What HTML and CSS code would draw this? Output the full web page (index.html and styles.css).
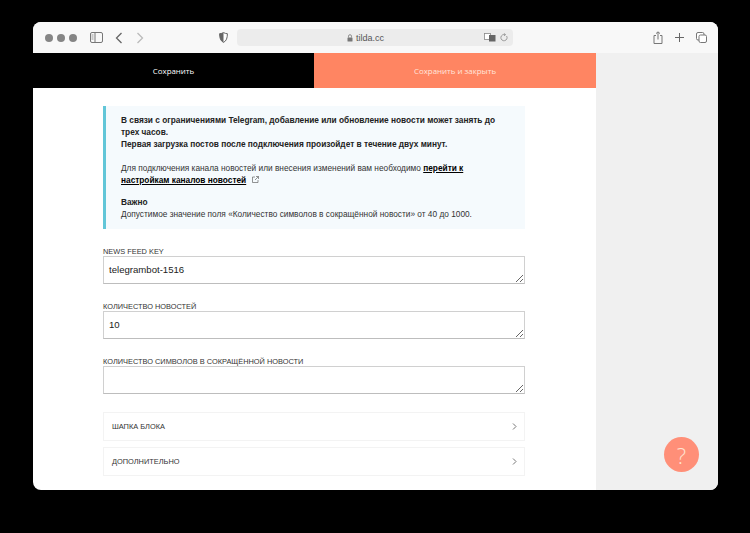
FILE: index.html
```html
<!DOCTYPE html>
<html lang="ru">

<head>
    <meta charset="UTF-8">
    <meta name="viewport" content="width=device-width, initial-scale=1.0">
    <title>tilda.cc</title>
    <link rel="stylesheet" href="styles.css">
</head>

<body>
    <div class="window">
        <header class="toolbar">
            <div class="dots"><span></span><span></span><span></span></div>
            <svg class="ico sidebar-ico" width="13" height="11" viewBox="0 0 13 11">
                <rect x="0.5" y="0.5" width="12" height="10" rx="1.5" fill="none" stroke="#777" />
                <path d="M5 1v9" stroke="#777" />
                <path d="M1.5 3h2M1.5 5h2M1.5 7h2" stroke="#999" />
            </svg>
            <svg class="ico back" width="8" height="12" viewBox="0 0 8 12">
                <path d="M6.5 1L1.5 6l5 5" fill="none" stroke="#666" stroke-width="1.3" />
            </svg>
            <svg class="ico forward" width="8" height="12" viewBox="0 0 8 12">
                <path d="M1.5 1l5 5-5 5" fill="none" stroke="#bbb" stroke-width="1.3" />
            </svg>
            <svg class="ico shield" width="9" height="11" viewBox="0 0 9 11">
                <path d="M4.5 0.6C6 1.4 7.2 1.7 8.4 1.7 8.4 6 7.4 9 4.5 10.4 1.6 9 0.6 6 0.6 1.7 1.8 1.7 3 1.4 4.5 0.6z" fill="#fff" stroke="#666" />
                <path d="M4.5 0.6C3 1.4 1.8 1.7 0.6 1.7 0.6 6 1.6 9 4.5 10.4z" fill="#666" />
            </svg>
            <div class="address">
                <div class="url">
                    <svg width="6" height="8" viewBox="0 0 6 8">
                        <path d="M1.5 3.5V2.2a1.5 1.5 0 0 1 3 0v1.3" fill="none" stroke="#777" stroke-width="0.8" />
                        <rect x="0.5" y="3.5" width="5" height="4" rx="0.6" fill="#777" />
                    </svg>
                    <span>tilda.cc</span>
                </div>
                <svg class="translate" width="12" height="9" viewBox="0 0 12 9">
                    <rect x="0.5" y="0.5" width="6" height="6" fill="#fff" stroke="#888" stroke-width="0.8" />
                    <rect x="5" y="2" width="6.5" height="6.5" fill="#666" />
                </svg>
                <svg width="8" height="9" viewBox="0 0 8 9">
                    <path d="M6.6 3a3.1 3.1 0 1 1-1.4-1.2M4.2 0.3l1.3 1.4-1.5 1" fill="none" stroke="#888" stroke-width="0.8" />
                </svg>
            </div>
            <svg class="ico share" width="10" height="13" viewBox="0 0 10 13">
                <path d="M3 4.5H1v8h8v-8H7M5 8.5V1M3 2.6L5 .8l2 1.8" fill="none" stroke="#777" />
            </svg>
            <svg class="ico plus" width="9" height="9" viewBox="0 0 9 9">
                <path d="M4.5 0v9M0 4.5h9" stroke="#666" />
            </svg>
            <svg class="ico tabs" width="11" height="11" viewBox="0 0 11 11">
                <rect x="0.5" y="0.5" width="7.5" height="7.5" rx="1.5" fill="#fff" stroke="#777" />
                <rect x="3" y="3" width="7.5" height="7.5" rx="1.5" fill="#fff" stroke="#777" />
            </svg>
        </header>
        <div class="page">
            <main class="panel">
                <div class="actions">
                    <button class="btn btn-save">Сохранить</button>
                    <button class="btn btn-close">Сохранить и закрыть</button>
                </div>
                <div class="form">
                    <section class="notice">
                        <p><strong>В связи с ограничениями Telegram, добавление или обновление новости может занять до
                                трех часов.<br>Первая загрузка постов после подключения произойдет в течение двух
                                минут.</strong></p>
                        <p>Для подключения канала новостей или внесения изменений вам необходимо <a href="#">перейти к
                                настройкам каналов новостей</a>
                            <svg class="ext" width="7" height="7" viewBox="0 0 7 7">
                                <path d="M3 1H.5v5.5H6V4M3 4l3.5-3.5M4 .5h2.5V3" fill="none" stroke="#666" stroke-width="0.7" />
                            </svg>
                        </p>
                        <p><strong>Важно</strong><br>Допустимое значение поля «Количество символов в
                            сокращённой новости» от 40 до 1000.</p>
                    </section>
                    <div class="field">
                        <label for="key">NEWS FEED KEY</label>
                        <textarea id="key">telegrambot-1516</textarea>
                    </div>
                    <div class="field">
                        <label for="count">КОЛИЧЕСТВО НОВОСТЕЙ</label>
                        <textarea id="count">10</textarea>
                    </div>
                    <div class="field">
                        <label for="chars">КОЛИЧЕСТВО СИМВОЛОВ В СОКРАЩЁННОЙ НОВОСТИ</label>
                        <textarea id="chars"></textarea>
                    </div>
                    <div class="rows">
                        <div class="row">
                            <span>ШАПКА БЛОКА</span>
                            <svg width="5" height="7" viewBox="0 0 5 7"><path d="M1 .5l3 3-3 3" fill="none" stroke="#777" /></svg>
                        </div>
                        <div class="row">
                            <span>ДОПОЛНИТЕЛЬНО</span>
                            <svg width="5" height="7" viewBox="0 0 5 7"><path d="M1 .5l3 3-3 3" fill="none" stroke="#777" /></svg>
                        </div>
                    </div>
                </div>
            </main>
            <aside class="side"></aside>
            <button class="help">?</button>
        </div>
    </div>
</body>

</html>
```

FILE: styles.css
```css
* {
    box-sizing: border-box;
}

html, body {
    height: 100%;
}

body {
    background-color: #000;
    font-family: "Liberation Sans", Arial, sans-serif;
    margin: 0;
    padding: 22px 32px 43px 33px;
}

.window {
    background-color: #fff;
    border-radius: 8px;
    display: flex;
    flex-direction: column;
    height: 100%;
    overflow: hidden;
}

/* barra do navegador */
.toolbar {
    align-items: center;
    background-color: #f8f8f8;
    display: flex;
    flex: none;
    height: 31px;
    padding-left: 12px;
}

.dots {
    display: flex;
    gap: 4px;
}

.dots span {
    background-color: #858585;
    border-radius: 50%;
    height: 8px;
    width: 8px;
}

.ico {
    flex: none;
}

.sidebar-ico {
    margin-left: 13px;
}

.back {
    margin-left: 12px;
}

.forward {
    margin-left: 13px;
}

.shield {
    margin-left: 75px;
}

.address {
    align-items: center;
    background-color: #ececec;
    border-radius: 4px;
    display: flex;
    gap: 4px;
    height: 17px;
    margin-left: 9px;
    padding-right: 5px;
    width: 276px;
}

.url {
    align-items: center;
    color: #555;
    display: flex;
    flex: 1;
    font-size: 9px;
    gap: 3px;
    justify-content: center;
    padding-left: 14px;
}

.share {
    margin-left: 140px;
}

.plus {
    margin-left: 12px;
}

.tabs {
    margin-left: 12px;
}

.page {
    display: flex;
    flex: 1;
    min-height: 0;
    position: relative;
}

.panel {
    flex: none;
    width: 563px;
}

.side {
    background-color: #f0f0f0;
    flex: 1;
}

.actions {
    display: flex;
    height: 35px;
}

.btn {
    border: 0;
    color: #fff;
    font-family: "Open Sans", sans-serif;
    font-size: 7.9px;
    font-weight: 400;
    padding: 0;
}

.btn-save {
    background-color: #000;
    flex: none;
    width: 281px;
}

.btn-close {
    background-color: #ff8562;
    color: #ffe6dc;
    flex: 1;
}

.form {
    padding: 18px 71px 0 70px;
}

.notice {
    background-color: #f5fafd;
    border-left: 3px solid #62c6d8;
    color: #333;
    font-size: 8.3px;
    height: 123px;
    line-height: 12px;
    padding: 8px 15px;
}

.notice p {
    margin: 0 0 12px;
}

.notice p + p {
    margin-bottom: 10px;
}

.notice strong {
    color: #222;
}

.notice a {
    color: #000;
    font-weight: bold;
}

.ext {
    margin-left: 3px;
}

.field {
    display: flex;
    flex-direction: column;
    height: 55px;
    padding-top: 19px;
}

.field label {
    color: #333;
    font-size: 7.4px;
    line-height: 8px;
}

.field textarea {
    background-color: #fff;
    border: 1px solid #d0d0d0;
    border-bottom-color: #bdbdbd;
    border-radius: 0;
    color: #222;
    display: block;
    font-family: "Liberation Sans", Arial, sans-serif;
    font-size: 9.6px;
    height: 29px;
    margin: 0;
    padding: 7px 5px 0;
    resize: vertical;
    width: 100%;
}

.rows {
    display: flex;
    flex-direction: column;
    gap: 6px;
    margin-top: 18px;
}

.row {
    align-items: center;
    border: 1px solid #f3f3f3;
    color: #333;
    display: flex;
    font-size: 7.4px;
    height: 29px;
    justify-content: space-between;
    padding: 0 7px 0 8px;
}

.help {
    background-color: #ff8f78;
    border: 0;
    border-radius: 50%;
    bottom: 18px;
    color: #ffe3d0;
    font-family: "Open Sans", sans-serif;
    font-size: 22px;
    font-weight: 300;
    height: 35px;
    padding: 0;
    position: absolute;
    right: 19px;
    width: 35px;
}
```
